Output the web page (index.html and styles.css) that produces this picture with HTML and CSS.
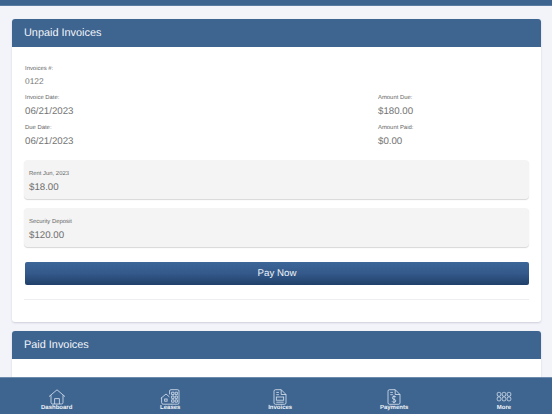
FILE: index.html
```html
<!DOCTYPE html>
<html>
  <head>
    <meta charset="utf-8">
    <meta name="viewport" content="width=device-width, initial-scale=1">
    <title>Invoices</title>
    <link rel="stylesheet" href="styles.css">
  </head>
  <body>
    <!-- TOP BAR -->
    <div class="topbar"></div>
    <!-- MAIN CONTENT -->
    <div class="main">
      <!-- UNPAID -->
      <div class="card">
        <h2 class="card-title">Unpaid Invoices</h2>
        <div class="card-body">
          <div class="field field-number">
            <div class="label">Invoices #:</div>
            <div class="value value-small">0122</div>
          </div>
          <div class="field-grid">
            <div class="field">
              <div class="label">Invoice Date:</div>
              <div class="value">06/21/2023</div>
            </div>
            <div class="field">
              <div class="label">Amount Due:</div>
              <div class="value">$180.00</div>
            </div>
            <div class="field">
              <div class="label">Due Date:</div>
              <div class="value">06/21/2023</div>
            </div>
            <div class="field">
              <div class="label">Amount Paid:</div>
              <div class="value">$0.00</div>
            </div>
          </div>
          <div class="line-item">
            <div class="label">Rent Jun, 2023</div>
            <div class="value">$18.00</div>
          </div>
          <div class="line-item">
            <div class="label">Security Deposit</div>
            <div class="value">$120.00</div>
          </div>
          <div class="pay-btn">Pay Now</div>
          <div class="divider"></div>
        </div>
      </div>
      <!-- PAID -->
      <div class="card">
        <h2 class="card-title">Paid Invoices</h2>
        <div class="card-body"></div>
      </div>
    </div>
    <!-- BOTTOM NAV -->
    <div class="nav">
      <div class="nav-item">
        <svg class="nav-icon" width="18" height="16" viewBox="0 0 18 16">
          <path d="M1 7.6 9 .8l8 6.8M3 6.2v7.2q0 1.6 1.6 1.6h8.8q1.6 0 1.6-1.6V6.2M6.6 15V9.6h4.8V15"/>
        </svg>
        <span>Dashboard</span>
      </div>
      <div class="nav-item">
        <svg class="nav-icon" width="20" height="16" viewBox="0 0 20 16">
          <path d="M.8 9.4 6 5l3.4 2.9M1.6 8.6v5q0 1.6 1.6 1.6h8.2"/>
          <rect x="4.7" y="10" width="2.4" height="2.2"/>
          <path d="M9.6 5.4V2q0-1.3 1.3-1.3h6.8q1.3 0 1.3 1.3v11.9q0 1.3-1.3 1.3h-6.8"/>
          <path d="M11.6 3.2h2.4v2.4h-2.4zM15.2 3.2h2.2v2.4h-2.2zM11.6 7h2.4v2.4h-2.4zM15.2 7h2.2v2.4h-2.2zM11.6 10.8h2.4v2.4h-2.4zM15.2 10.8h2.2v2.4h-2.2z"/>
        </svg>
        <span>Leases</span>
      </div>
      <div class="nav-item">
        <svg class="nav-icon" width="14" height="16" viewBox="0 0 14 16">
          <path d="M1 2.2Q1 .7 2.5 .7h5.7L13 5.5v8.3q0 1.5-1.500 1.500h-9Q1 15.300 1 13.800zM8.200 .7v4.800H13"/>
          <path d="M3.300 3.400h2.600M3.300 5.700h2.600"/>
          <rect x="3.300" y="8" width="7.400" height="3.200"/>
          <path d="M3.300 13.200h7.400"/>
        </svg>
        <span>Invoices</span>
      </div>
      <div class="nav-item">
        <svg class="nav-icon" width="14" height="16" viewBox="0 0 14 16">
          <path d="M1 2.2Q1 .7 2.5 .7h5.7L13 5.5v8.3q0 1.5-1.5 1.5h-9Q1 15.3 1 13.8zM8.2 .7v4.8H13"/>
          <path d="M3.3 3.4h2.6M3.3 5.7h2.6"/>
          <path d="M9 8.2Q8.500 7.300 7 7.300 5.300 7.300 5.300 8.800 5.300 10.100 7 10.300 8.800 10.500 8.800 11.900 8.800 13.300 7 13.300 5.500 13.300 5 12.300M7 6.300v8"/>
        </svg>
        <span>Payments</span>
      </div>
      <div class="nav-item">
        <svg class="nav-icon" width="16" height="16" viewBox="0 0 16 16">
          <rect x="1.2" y="3.4" width="3.6" height="3.8" rx="1.3"/>
          <rect x="6.2" y="3.4" width="3.6" height="3.8" rx="1.3"/>
          <rect x="11.2" y="3.4" width="3.6" height="3.8" rx="1.3"/>
          <rect x="1.2" y="8" width="3.6" height="3.8" rx="1.3"/>
          <rect x="6.2" y="8" width="3.6" height="3.8" rx="1.3"/>
          <rect x="11.2" y="8" width="3.6" height="3.8" rx="1.3"/>
        </svg>
        <span>More</span>
      </div>
    </div>
  </body>
</html>
```

FILE: styles.css
```css
/* RESET */
html, body { margin: 0; padding: 0; height: 100%; overflow: hidden; }
body {
  display: flex;
  flex-direction: column;
  background: #f3f4fa;
  color: #666;
  font-family: "Liberation Sans", Arial, sans-serif;
  text-rendering: geometricPrecision;
}
/* TOP BAR */
.topbar {
  flex: none;
  height: 6px;
  background: #3e6490;
  border-bottom: 1px solid #5b7da3;
  box-sizing: border-box;
}
/* MAIN CONTENT */
.main {
  flex: 1;
  min-height: 0;
  overflow: hidden;
  padding: 13px 11px 0 12px;
}
/* CARDS */
.card {
  background: #fff;
  border-radius: 3px;
  box-shadow: 0 1px 2px rgba(60, 60, 90, 0.2);
  margin-bottom: 9px;
  overflow: hidden;
}
.card-title {
  margin: 0;
  height: 28px;
  line-height: 28px;
  padding-left: 12px;
  background: #3e6490;
  color: #f2f5f9;
  font-size: 10.9px;
  font-weight: normal;
}
.card-body { padding: 18px 12px 22px 13px; }
/* FIELDS */
.label {
  font-size: 5.9px;
  line-height: 8px;
  color: #666;
}
.value {
  font-size: 9.7px;
  line-height: 14px;
  margin-top: 3px;
  color: #737373;
}
.value-small { font-size: 8.4px; margin-top: 1px; }
.field-number { margin-bottom: 6px; }
.field-grid {
  display: grid;
  grid-template-columns: 353px 1fr;
  row-gap: 5px;
  margin-bottom: 11px;
}
/* LINE ITEMS */
.line-item {
  height: 39px;
  box-sizing: border-box;
  padding: 10px 5px 0 5px;
  margin: 0 0 9.3px -1px;
  background: #f4f4f4;
  border-radius: 4px;
  box-shadow: 0 1px 1px rgba(0, 0, 0, 0.16);
}
.line-item .value { margin-top: 3px; color: #6e6e6e; }
/* BUTTON */
.pay-btn {
  height: 23px;
  line-height: 23px;
  margin: 15px 0 14px 0;
  text-align: center;
  font-size: 9.7px;
  color: #f0f4f8;
  border-radius: 2px;
  background: linear-gradient(to bottom, #3c6698 0%, #34598a 50%, #1f4069 100%);
}
.divider { height: 1px; margin-left: -1px; background: #eeeef2; }
/* BOTTOM NAV */
.nav {
  flex: none;
  height: 37px;
  box-sizing: border-box;
  display: flex;
  justify-content: space-between;
  padding: 11px 40px 0 41px;
  background: #3e6490;
  border-top: 1px solid #6c8bad;
}
.nav-item {
  display: flex;
  flex-direction: column;
  align-items: center;
  color: #eef2f7;
  font-size: 6px;
  font-weight: bold;
  line-height: 7px;
}
.nav-icon {
  display: block;
  fill: none;
  stroke: #dde7f2;
  stroke-width: 0.8;
}
```
